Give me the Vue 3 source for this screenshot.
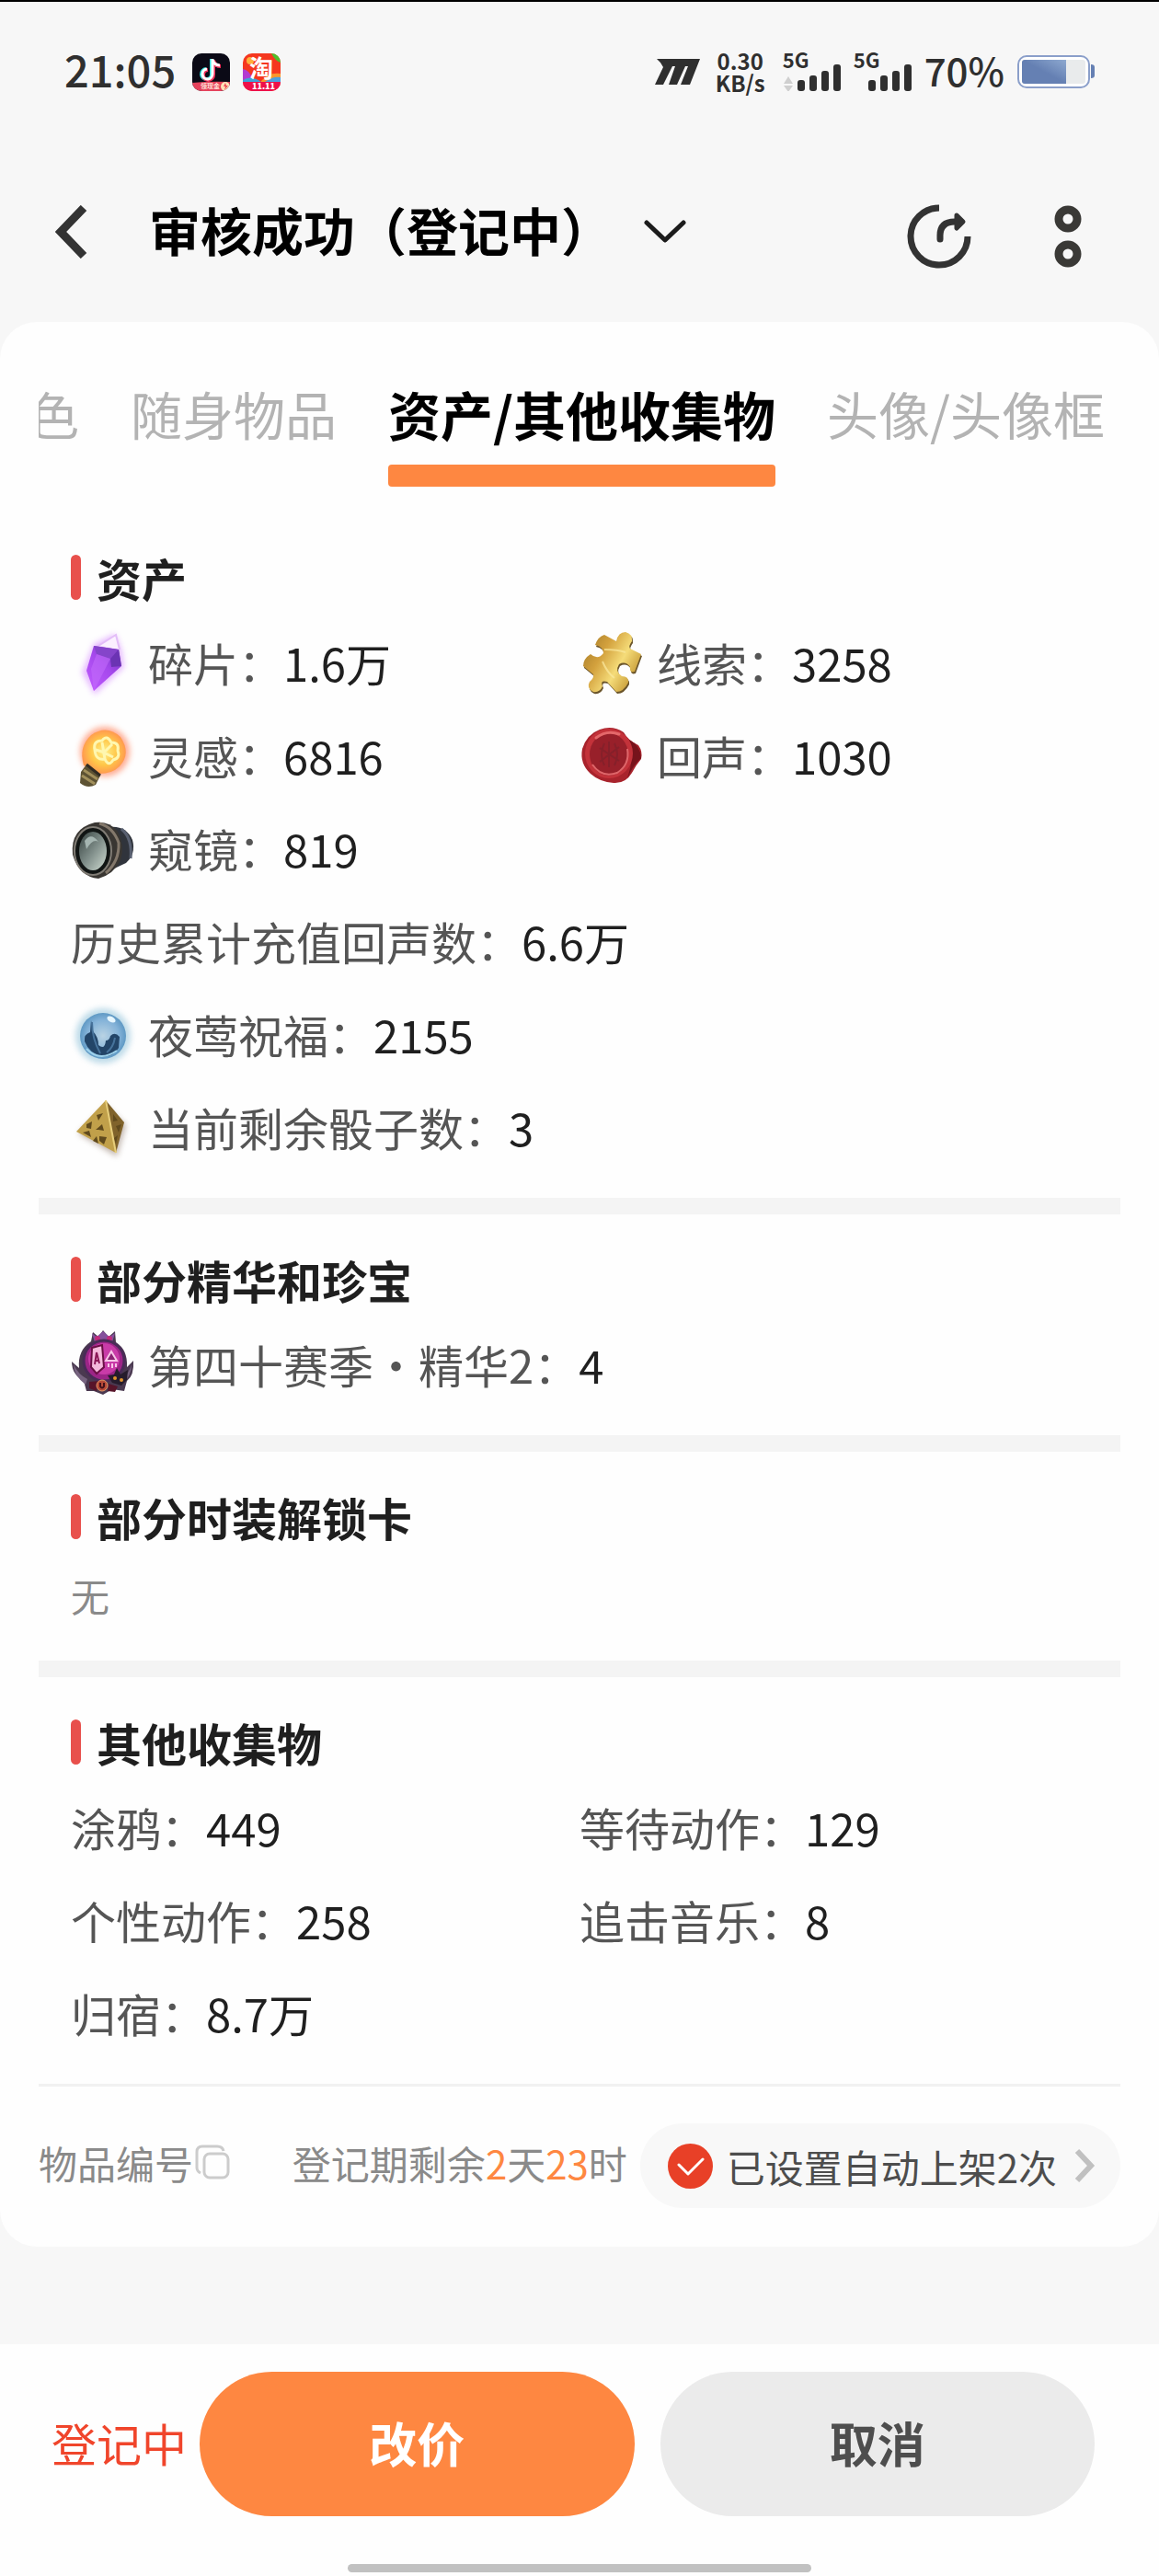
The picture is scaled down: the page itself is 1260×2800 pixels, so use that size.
<template>
    <div class="page">
        <div class="status-bar">
            <div class="status-left">
                <span class="clock">21:05</span>
                <svg class="app-icon" viewBox="0 0 41 41" aria-hidden="true">
                    <defs>
                        <clipPath id="app-clip"><rect width="41" height="41" rx="10" /></clipPath>
                    </defs>
                    <g clip-path="url(#app-clip)">
                        <rect width="41" height="41" fill="#0b0a16" />
                        <g fill="none" stroke-width="4">
                            <path d="M21 6V22a5.500 5.500 0 1 1-6-5M21 7q2 6 8 6" stroke="#35e3e0" />
                            <path d="M23 7V23a5.500 5.500 0 1 1-6-5M23 8q2 6 8 6" stroke="#f0305a" />
                            <path d="M22 6V22a5.500 5.500 0 1 1-6-5M22 7q2 6 8 6" stroke="#fff" stroke-width="3" />
                        </g>
                        <path d="M0 32q20-2 41-1v10H0z" fill="#e5425c" />
                        <circle cx="36" cy="36" r="5" fill="#ffe3b8" />
                        <path d="M36 32l-2 4h2l-1 4 4-5h-2z" fill="#ef4a55" />
                    </g>
                    <text x="9" y="38" font-size="7" font-weight="700" fill="#ffe1d8">领现金</text>
                </svg>
                <svg class="app-icon" viewBox="0 0 41 41" aria-hidden="true">
                    <g clip-path="url(#app-clip)">
                        <rect width="41" height="41" fill="#f5371f" />
                        <path d="M31 0h10v10q-6-2-10-10z" fill="#4cc02c" />
                        <path d="M0 17q7 1 10 10L0 29z" fill="#b33bd0" />
                        <path d="M0 29q9-6 20 2H0z" fill="#3fa2d8" />
                        <path d="M20 30q8-10 21-8v9H20z" fill="#f9962b" />
                        <path d="M24 31q8-6 17-5v6z" fill="#4f9fdc" />
                        <circle cx="8" cy="8" r="4" fill="#ffb03b" />
                        <rect y="31" width="41" height="10" fill="#ee1049" />
                    </g>
                    <text x="7" y="26" font-size="26" font-weight="700" fill="#fff">淘</text>
                    <text x="10" y="39" font-size="9" font-weight="900" fill="#fff">11.11</text>
                </svg>
            </div>
            <div class="status-right">
                <svg class="m-icon" viewBox="0 0 50 30" aria-hidden="true">
                    <path d="M2 1H49L38 29H28L36 9H33L24 29H15L22 9H19L9 29H0L9 10Q7 5 2 1Z" fill="#2f2f2f" />
                </svg>
                <span class="speed">
                    <span>0.30</span>
                    <span>KB/s</span>
                </span>
                <span v-for="(sim, index) in sims" :key="index" class="signal">
                    <span class="signal-type">5G</span>
                    <svg viewBox="0 0 64 30" aria-hidden="true">
                        <path v-if="sim.traffic" d="M6 14l5 8H1zM6 31l5-7H1z" fill="#cfcfcf" />
                        <g fill="#2f2f2f">
                            <rect x="16" y="18" width="8" height="12" rx="3" />
                            <rect x="29" y="13" width="8" height="17" rx="3" />
                            <rect x="42" y="8" width="8" height="22" rx="3" />
                            <rect x="55" y="1" width="8" height="29" rx="3" />
                        </g>
                    </svg>
                </span>
                <span class="percent">70%</span>
                <svg class="battery" viewBox="0 0 84 36" aria-hidden="true">
                    <defs>
                        <linearGradient id="battery-fill" x1="0" y1="1" x2="1" y2="0">
                            <stop offset="0.500" stop-color="#6580b3" />
                            <stop offset="1" stop-color="#8ea9d0" />
                        </linearGradient>
                    </defs>
                    <rect x="1" y="1" width="77" height="34" rx="9" fill="#fff" stroke="#8b9fca" stroke-width="2" />
                    <rect x="5" y="5" width="69" height="26" rx="3" fill="#e9ebec" />
                    <path d="M8 5H53V31H8a3 3 0 0 1-3-3V8a3 3 0 0 1 3-3z" fill="url(#battery-fill)" />
                    <path d="M80 10q4 0 4 3v9q0 3-4 3z" fill="#6580b3" />
                </svg>
            </div>
        </div>

        <header class="header">
            <button class="icon-button back" type="button" aria-label="返回">
                <svg viewBox="0 0 36 58"><path d="M31 3L6 29L31 55" fill="none" stroke="#333" stroke-width="9" /></svg>
            </button>
            <button class="title-button" type="button">
                <h1 class="title">审核成功（登记中）</h1>
                <svg class="title-arrow" viewBox="0 0 46 26">
                    <path d="M3 3L23 22L43 3" fill="none" stroke="#1c1c1c" stroke-width="5" stroke-linecap="round" stroke-linejoin="round" />
                </svg>
            </button>
            <div class="header-actions">
                <button class="icon-button share" type="button" aria-label="分享">
                    <svg viewBox="0 0 70 70">
                        <path d="M35 4A31 31 0 1 0 66 35" fill="none" stroke="#333" stroke-width="7" />
                        <path d="M36 38V34Q36 19 52 19" fill="none" stroke="#333" stroke-width="7" stroke-linecap="round" />
                        <path d="M54 12L61 19L54 26Z" fill="#333" stroke="#333" stroke-width="5" stroke-linejoin="round" />
                    </svg>
                </button>
                <button class="icon-button more" type="button" aria-label="更多">
                    <svg viewBox="0 0 30 68">
                        <g fill="none" stroke="#3a3936" stroke-width="9">
                            <circle cx="15" cy="15" r="10" />
                            <circle cx="15" cy="53" r="10" />
                        </g>
                    </svg>
                </button>
            </div>
        </header>

        <main class="card">
            <nav class="tabs">
                <div class="tab-track">
                    <button v-for="tab in tabs"
                            :key="tab"
                            type="button"
                            class="tab"
                            :class="{ active: tab === activeTab }"
                            @click="activeTab = tab">
                        {{ tab }}
                    </button>
                </div>
            </nav>

            <section v-for="section in sections" :key="section.title" class="section">
                <h2 class="section-title">{{ section.title }}</h2>
                <div v-if="section.items.length" class="grid">
                    <div v-for="item in section.items"
                         :key="item.label"
                         class="item"
                         :class="{ wide: item.wide }">
                        <svg v-if="item.icon" class="item-icon" viewBox="0 -3 68 68" aria-hidden="true">
                            <template v-if="item.icon === 'shard'">
                                <defs>
                                    <linearGradient id="shard" x1="0" y1="1" x2="0.800" y2="0">
                                        <stop offset="0" stop-color="#c25cff" />
                                        <stop offset="0.600" stop-color="#a548ec" />
                                        <stop offset="1" stop-color="#7436bd" />
                                    </linearGradient>
                                </defs>
                                <path class="halo" d="M25 11L48 0L55 17L58 36L26 66L12 42Z" fill="#dc9bff" />
                                <path d="M30 13L49 1L53 17" fill="#fbf0ff" stroke="#e3bdf8" stroke-width="2" />
                                <path d="M25 13L52 17L55 35L25 62L17 40Z" fill="url(#shard)" />
                                <path d="M25 13L52 17L43 27L28 22Z" fill="#8545ca" />
                                <path d="M43 27L52 17L55 35L44 36Z" fill="#6b34b3" />
                                <path d="M28 22L43 27L25 62L22 38Z" fill="#c26bfa" opacity="0.600" />
                            </template>
                            <template v-else-if="item.icon === 'puzzle'">
                                <defs>
                                    <linearGradient id="puzzle" x1="0" y1="0" x2="1" y2="0.600">
                                        <stop offset="0" stop-color="#9c7426" />
                                        <stop offset="0.400" stop-color="#d3a13d" />
                                        <stop offset="0.700" stop-color="#f5dc79" />
                                        <stop offset="1" stop-color="#c79a35" />
                                    </linearGradient>
                                </defs>
                                <path transform="translate(1 2)" d="M27 1L40 8Q42-2 50-2Q58 0 57 8Q53 13 55 16L67 22L60 41Q54 43 55 36Q50 29 43 33Q38 41 46 46Q54 46 53 53Q48 63 40 63L30 52Q22 50 25 57Q22 64 15 63Q7 59 11 52Q16 48 15 44L4 35Q4 27 12 22Q20 29 26 21Q26 14 17 12Q20 3 27 1Z" fill="#6b552b" />
                                <path d="M27 1L40 8Q42-2 50-2Q58 0 57 8Q53 13 55 16L67 22L60 41Q54 43 55 36Q50 29 43 33Q38 41 46 46Q54 46 53 53Q48 63 40 63L30 52Q22 50 25 57Q22 64 15 63Q7 59 11 52Q16 48 15 44L4 35Q4 27 12 22Q20 29 26 21Q26 14 17 12Q20 3 27 1Z" fill="url(#puzzle)" />
                                <path d="M27 17Q42 17 50 20M25 30Q30 42 38 48" fill="none" stroke="#fbe9a0" stroke-width="2" opacity="0.700" />
                            </template>
                            <template v-else-if="item.icon === 'bulb'">
                                <defs>
                                    <radialGradient id="bulb">
                                        <stop offset="0" stop-color="#fff08a" />
                                        <stop offset="0.600" stop-color="#ffc648" />
                                        <stop offset="1" stop-color="#ff9a4f" />
                                    </radialGradient>
                                </defs>
                                <circle class="halo" cx="37" cy="27" r="27" fill="#ff8a66" />
                                <path d="M14 42Q8 22 22 9Q39-3 54 11Q66 29 53 43Q45 51 31 51Z" fill="url(#bulb)" />
                                <path d="M26 25q-2-10 8-10q5-7 10 2q9 0 7 9q3 8-5 10q-5 8-9-1q-10 2-11-10zM34 17l3 18M45 19l-9 9l10 5M27 25l10 3" fill="none" stroke="#fff7b0" stroke-width="3" />
                                <path d="M17 41L32 53L27 63Q18 68 10 61L11 49Z" fill="#5d5233" />
                                <path d="M14 47L29 57M12 53L26 62" stroke="#a2905c" stroke-width="3" />
                                <path d="M17 41L32 53" stroke="#322c22" stroke-width="3" />
                            </template>
                            <template v-else-if="item.icon === 'seal'">
                                <path d="M22 3Q36-2 48 6Q53 15 64 20Q69 27 67 35Q61 42 57 50Q50 62 37 61Q22 60 12 51Q0 40 3 24Q8 8 22 3Z" fill="#a8232c" />
                                <path d="M54 14Q66 20 67 34Q58 42 52 56Q60 34 54 14Z" fill="#77131b" />
                                <ellipse cx="32" cy="29" rx="26" ry="27" fill="#c3323a" />
                                <ellipse cx="32" cy="30" rx="21" ry="23" fill="#98202a" />
                                <path d="M14 41Q24 56 41 50Q55 41 52 24" fill="none" stroke="#df666a" stroke-width="2" />
                                <path d="M18 12Q30 3 43 8" fill="none" stroke="#e4686a" stroke-width="3" stroke-linecap="round" />
                                <path d="M32 16v28M22 23l21 14M22 38l21-16M27 18q-6 12 0 24M38 18q6 12 0 24" fill="none" stroke="#85202a" stroke-width="2" />
                            </template>
                            <template v-else-if="item.icon === 'scope'">
                                <defs>
                                    <linearGradient id="scope-lens" x1="0" y1="0" x2="1" y2="1">
                                        <stop offset="0" stop-color="#35413f" />
                                        <stop offset="0.500" stop-color="#7e8c88" />
                                        <stop offset="1" stop-color="#cfdcd2" />
                                    </linearGradient>
                                </defs>
                                <path d="M42 8Q60 6 67 22Q71 37 60 47L43 55Z" fill="#30343c" />
                                <path d="M55 10Q67 20 65 42" fill="none" stroke="#596071" stroke-width="3" />
                                <path d="M26 3Q42 1 51 13Q59 27 54 44Q47 59 30 64Q9 62 2 38Q-1 10 26 3Z" fill="#393632" />
                                <path d="M31 4Q46 8 52 25Q53 45 38 58" fill="none" stroke="#83786b" stroke-width="3" />
                                <ellipse cx="24" cy="34" rx="20" ry="26" fill="#111514" stroke="#807c75" stroke-width="2" />
                                <ellipse cx="24" cy="34" rx="15" ry="21" fill="url(#scope-lens)" />
                                <path d="M15 23Q22 13 30 24Q24 20 17 32Z" fill="#a5b5b1" />
                            </template>
                            <template v-else-if="item.icon === 'orb'">
                                <defs>
                                    <radialGradient id="orb">
                                        <stop offset="0" stop-color="#b9d3e4" />
                                        <stop offset="0.700" stop-color="#83b2d8" />
                                        <stop offset="1" stop-color="#5f99c4" />
                                    </radialGradient>
                                </defs>
                                <circle class="halo" cx="35" cy="33" r="30" fill="#a4cde0" />
                                <circle cx="35" cy="33" r="25" fill="url(#orb)" />
                                <path d="M22 16L24 28Q30 34 30 43Q37 49 38 38Q42 38 43 33Q48 28 53 34L52 46Q45 57 34 55Q20 52 15 39Q14 31 21 29Z" fill="#234568" />
                                <path d="M23 18Q23 36 32 52M39 51Q46 46 48 35" fill="none" stroke="#47739b" stroke-width="2" />
                                <ellipse cx="44" cy="15" rx="5" ry="3" fill="#e6f7ff" transform="rotate(30 44 15)" />
                                <path d="M17 47Q31 62 50 49" fill="none" stroke="#9ed2ec" stroke-width="2" />
                            </template>
                            <template v-else-if="item.icon === 'dice'">
                                <path class="halo" d="M38 8L8 38L50 63L60 29Z" fill="#a6958a" />
                                <path d="M38 2L6 36L49 59Z" fill="#c1a04a" />
                                <path d="M38 2L58 26L49 59Z" fill="#80632b" />
                                <path d="M38 2L49 59" stroke="#e7ce7b" stroke-width="2" />
                                <g fill="#604a1d">
                                    <path d="M28 18l7-2-5 8zM17 28l6-3-1 8-5-1zM27 34l7-6 2 7-6-1zM13 37l7-2 2 7zM31 41l8 1-3 8-5-4zM24 46l4-5 2 8z" />
                                    <path d="M46 17l5 7-5 1zM49 30l6-2-3 9zM47 43l4-3-2 9z" />
                                </g>
                            </template>
                            <template v-else-if="item.icon === 'badge'">
                                <path d="M1 28L9 35Q7 16 22 6L24-4L30 1L35-6L41 1L48-5L49 7Q62 15 61 34L68 27Q69 43 61 49L58 60L45 58L35 64L25 60L17 60L14 49Q1 42 1 28Z" fill="#4a3950" />
                                <path d="M3 31Q8 42 18 47L16 53Q3 43 3 31ZM66 31Q63 42 54 49L56 53Q66 43 66 31Z" fill="#776480" />
                                <path d="M23-3L28 1L35-5L42 1L48-3L45 7H26Z" fill="#85519c" />
                                <circle cx="29" cy="3" r="3" fill="#c22b7d" />
                                <circle cx="42" cy="3" r="3" fill="#c22b7d" />
                                <circle cx="36" cy="27" r="22" fill="#9c2587" stroke="#4a2b58" stroke-width="3" />
                                <circle cx="36" cy="25" r="17" fill="#c93ba8" />
                                <path d="M23 13L34 10L36 34L28 41L22 34Z" fill="#f4b9dc" stroke="#6b0f45" stroke-width="2" />
                                <path d="M28 18L26 31M28 18L31 30M26 27H31" fill="none" stroke="#8c1858" stroke-width="2" />
                                <path d="M38 27L44 17L50 27ZM41 30V34M45 30V35M49 30V34" fill="#8a2273" stroke="#f7c6e7" stroke-width="2" />
                                <path d="M40 43L47 42L50 35L54 42L62 37L61 48L55 54L45 51Z" fill="#261c2c" />
                                <circle cx="48" cy="46" r="2" fill="#e0932e" />
                                <circle cx="55" cy="48" r="2" fill="#e0932e" />
                                <path d="M20 50L31 49L28 60L20 57ZM41 52L51 55L48 61L40 60Z" fill="#571429" />
                                <circle cx="34" cy="54" r="6" fill="#b84a38" stroke="#e19a68" stroke-width="1" />
                                <path d="M32 51v4q2 3 4 0v-4" fill="none" stroke="#431119" stroke-width="2" />
                            </template>
                        </svg>
                        <span class="item-label">{{ item.label }}：</span>
                        <span class="item-value">{{ item.value }}</span>
                    </div>
                </div>
                <p v-else class="empty">无</p>
            </section>

            <div class="card-footer">
                <button type="button" class="footer-text copy">
                    物品编号
                    <svg viewBox="0 0 38 38" aria-hidden="true">
                        <g fill="none" stroke="#ccc" stroke-width="3">
                            <path d="M6 31Q2 29 2 25V8Q2 2 8 2H24Q30 2 31 7" />
                            <rect x="10" y="10" width="26" height="26" rx="6" />
                        </g>
                    </svg>
                </button>
                <span class="footer-text">登记期剩余<em>2</em>天<em>23</em>时</span>
                <button type="button" class="auto-list">
                    <svg class="check" viewBox="0 0 49 49" aria-hidden="true">
                        <circle cx="24.500" cy="24.500" r="24.500" fill="#e84027" />
                        <path d="M12 23L22 33L38 17" fill="none" stroke="#fff" stroke-width="3" stroke-linecap="round" stroke-linejoin="round" />
                    </svg>
                    <span>已设置自动上架2次</span>
                    <svg class="arrow" viewBox="0 0 24 38" aria-hidden="true">
                        <path d="M4 3L19 19L4 35" fill="none" stroke="#c0c0c0" stroke-width="6" />
                    </svg>
                </button>
            </div>
        </main>

        <footer class="action-bar">
            <div class="actions">
                <span class="state">登记中</span>
                <button type="button" class="action primary">改价</button>
                <button type="button" class="action">取消</button>
            </div>
            <div class="home-indicator"></div>
        </footer>
    </div>
</template>

<script setup>
import { ref } from 'vue';

const sims = [{ traffic: true }, { traffic: false }];

const tabs = ['色', '随身物品', '资产/其他收集物', '头像/头像框'];
const activeTab = ref('资产/其他收集物');

const sections = [
    {
        title: '资产',
        items: [
            { icon: 'shard', label: '碎片', value: '1.6万' },
            { icon: 'puzzle', label: '线索', value: '3258' },
            { icon: 'bulb', label: '灵感', value: '6816' },
            { icon: 'seal', label: '回声', value: '1030' },
            { icon: 'scope', label: '窥镜', value: '819', wide: true },
            { label: '历史累计充值回声数', value: '6.6万', wide: true },
            { icon: 'orb', label: '夜莺祝福', value: '2155', wide: true },
            { icon: 'dice', label: '当前剩余骰子数', value: '3', wide: true },
        ],
    },
    {
        title: '部分精华和珍宝',
        items: [{ icon: 'badge', label: '第四十赛季・精华2', value: '4', wide: true }],
    },
    { title: '部分时装解锁卡', items: [] },
    {
        title: '其他收集物',
        items: [
            { label: '涂鸦', value: '449' },
            { label: '等待动作', value: '129' },
            { label: '个性动作', value: '258' },
            { label: '追击音乐', value: '8' },
            { label: '归宿', value: '8.7万' },
        ],
    },
];
</script>

<style>
body {
    margin: 0;
    background: #f7f7f7;
}
</style>

<style scoped>
.page {
    box-sizing: border-box;
    display: flex;
    flex-direction: column;
    min-height: 100vh;
    border-top: 2px solid #000;
    font-family: "Noto Sans CJK SC", sans-serif;
    color: #1f1f1f;
}

button {
    padding: 0;
    border: 0;
    background: none;
    font: inherit;
    color: inherit;
    white-space: nowrap;
    cursor: pointer;
}

svg {
    display: block;
    flex: none;
}

.status-bar {
    display: flex;
    align-items: center;
    justify-content: space-between;
    height: 152px;
    padding: 0 70px;
    color: #2f2f2f;
    font-weight: 500;
}

.status-left,
.status-right {
    display: flex;
    align-items: center;
}

.status-left {
    gap: 14px;
}

.clock {
    margin-right: 4px;
    padding-bottom: 6px;
    font-size: 47px;
    line-height: 56px;
}

.app-icon {
    width: 41px;
    height: 41px;
}

.m-icon {
    width: 50px;
    height: 30px;
    margin-right: 16px;
}

.speed {
    display: flex;
    flex-direction: column;
    align-items: center;
    margin-right: 19px;
    font-size: 24px;
    font-weight: 700;
    line-height: 24px;
}

.signal {
    display: flex;
    flex-direction: column;
    margin-right: 13px;
}

.signal-type {
    height: 12px;
    font-size: 22px;
    font-weight: 700;
    line-height: 15px;
}

.signal svg {
    width: 64px;
    height: 30px;
}

.percent {
    margin-right: 14px;
    padding-bottom: 4px;
    font-size: 42px;
    line-height: 56px;
}

.battery {
    width: 84px;
    height: 36px;
}

.header {
    display: flex;
    align-items: center;
    height: 196px;
    padding: 0 84px 0 60px;
}

.back svg {
    width: 36px;
    height: 58px;
}

.title-button {
    display: flex;
    align-items: center;
    gap: 34px;
    margin-left: 66px;
}

.title {
    margin: 0;
    padding-bottom: 6px;
    color: #000;
    font-size: 56px;
    font-weight: 700;
    line-height: 72px;
}

.title-arrow {
    width: 46px;
    height: 26px;
}

.header-actions {
    display: flex;
    align-items: center;
    gap: 90px;
    margin-left: auto;
    padding-top: 10px;
}

.share svg {
    width: 70px;
    height: 70px;
}

.more svg {
    width: 30px;
    height: 68px;
}

.card {
    padding: 69px 42px 42px;
    border-radius: 40px;
    background: #fefefe;
}

.tabs {
    margin-bottom: 28px;
    overflow: hidden;
}

.tab-track {
    display: flex;
    align-items: flex-start;
    gap: 56px;
    margin-left: -12px;
}

.tab {
    color: #b3b3b3;
    font-size: 56px;
    line-height: 60px;
}

.tab.active {
    color: #000;
    font-size: 57px;
    font-weight: 700;
}

.tab.active::after {
    content: "";
    display: block;
    height: 24px;
    margin-top: 26px;
    border-radius: 4px;
    background: #fe8741;
}

.section {
    padding: 46px 35px 27px;
    border-bottom: 18px solid #f4f4f4;
}

.section:last-of-type {
    border-bottom: 3px solid #f1f1f1;
}

.section-title {
    display: flex;
    align-items: center;
    gap: 17px;
    margin: 0 0 17px;
    font-size: 49px;
    font-weight: 700;
    line-height: 49px;
}

.section-title::before {
    content: "";
    width: 11px;
    height: 49px;
    border-radius: 6px;
    background: #e8504c;
}

.grid {
    display: grid;
    grid-template-columns: 1fr 1fr;
}

.item {
    display: flex;
    align-items: center;
    height: 101px;
    font-size: 49px;
    white-space: nowrap;
}

.item.wide {
    grid-column: 1 / -1;
}

.item-icon {
    width: 68px;
    height: 68px;
    margin-right: 16px;
    overflow: visible;
}

.halo {
    filter: blur(3px);
    opacity: 0.7;
}

.item-label {
    color: #555;
}

.empty {
    margin: 0;
    color: #8a8a8a;
    font-size: 42px;
    line-height: 88px;
}

.card-footer {
    display: flex;
    align-items: center;
    justify-content: space-between;
    margin-top: 40px;
    font-size: 42px;
}

.footer-text {
    padding-bottom: 8px;
    color: #8a8a8a;
    white-space: nowrap;
}

.footer-text em {
    color: #fe8741;
    font-style: normal;
}

.copy {
    display: flex;
    align-items: center;
    gap: 2px;
    margin-right: 54px;
}

.copy svg {
    width: 38px;
    height: 38px;
}

.auto-list {
    display: flex;
    align-items: center;
    height: 92px;
    padding: 0 27px 0 30px;
    border-radius: 46px;
    background: #f8f8f8;
    color: #4d4d4d;
}

.check {
    width: 49px;
    height: 49px;
    margin-right: 15px;
}

.arrow {
    width: 24px;
    height: 38px;
    margin-left: 18px;
}

.action-bar {
    margin-top: auto;
    padding: 30px 0 4px;
    background: #fefefe;
}

.actions {
    display: flex;
    align-items: center;
    gap: 28px;
    padding: 0 70px 0 56px;
}

.state {
    margin-right: -14px;
    padding-bottom: 4px;
    color: #f0452b;
    font-size: 49px;
    white-space: nowrap;
}

.action {
    flex: 1;
    height: 157px;
    padding-bottom: 4px;
    border-radius: 79px;
    background: #ebebeb;
    color: #4e4e4e;
    font-size: 52px;
    font-weight: 700;
}

.action.primary {
    background: #fe8741;
    color: #fff;
}

.home-indicator {
    width: 40%;
    height: 9px;
    margin: 52px auto 0;
    border-radius: 5px;
    background: #c1c1c1;
}
</style>
